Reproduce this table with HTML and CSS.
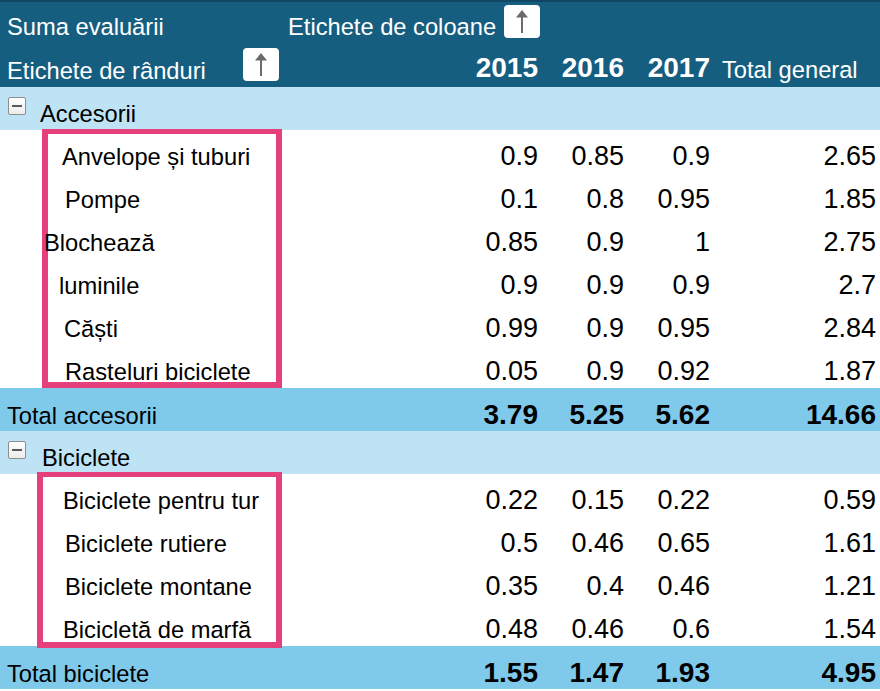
FILE: index.html
```html
<!DOCTYPE html>
<html lang="ro">
<head>
<meta charset="utf-8">
<title>Pivot</title>
<link rel="stylesheet" href="styles.css">
</head>
<body>
<div class="pivot">
  <header class="hdr">
    <div class="hdr-top">
      <span class="hdr-text sum-label">Suma evaluării</span>
      <span class="hdr-text col-label">Etichete de coloane</span>
      <span class="sort-btn"><svg viewBox="0 0 36 33" width="36" height="33"><polygon points="18,5 12,12.5 24,12.5" fill="#6b6b6b"/><line x1="18" y1="12" x2="18" y2="28" stroke="#6b6b6b" stroke-width="2"/></svg></span>
    </div>
    <div class="grid hdr-bottom">
      <div class="row-label-cell">
        <span class="hdr-text row-label">Etichete de rânduri</span>
        <span class="sort-btn"><svg viewBox="0 0 36 33" width="36" height="33"><polygon points="18,5 12,12.5 24,12.5" fill="#6b6b6b"/><line x1="18" y1="12" x2="18" y2="28" stroke="#6b6b6b" stroke-width="2"/></svg></span>
      </div>
      <div class="year">2015</div>
      <div class="year">2016</div>
      <div class="year">2017</div>
      <div class="hdr-total">Total general</div>
    </div>
  </header>

  <div class="grid row group">
    <div class="label group-label"><span class="toggle"></span>Accesorii</div>
    <div></div><div></div><div></div><div></div>
  </div>

  <div class="items">
    <div class="highlight hl-first"></div>
    <div class="grid row item">
      <div class="label indent-62">Anvelope și tuburi</div>
      <div class="num">0.9</div><div class="num">0.85</div><div class="num">0.9</div><div class="num last">2.65</div>
    </div>
    <div class="grid row item">
      <div class="label indent-65">Pompe</div>
      <div class="num">0.1</div><div class="num">0.8</div><div class="num">0.95</div><div class="num last">1.85</div>
    </div>
    <div class="grid row item">
      <div class="label indent-44">Blochează</div>
      <div class="num">0.85</div><div class="num">0.9</div><div class="num">1</div><div class="num last">2.75</div>
    </div>
    <div class="grid row item">
      <div class="label indent-59">luminile</div>
      <div class="num">0.9</div><div class="num">0.9</div><div class="num">0.9</div><div class="num last">2.7</div>
    </div>
    <div class="grid row item">
      <div class="label indent-64">Căști</div>
      <div class="num">0.99</div><div class="num">0.9</div><div class="num">0.95</div><div class="num last">2.84</div>
    </div>
    <div class="grid row item">
      <div class="label indent-65">Rasteluri biciclete</div>
      <div class="num">0.05</div><div class="num">0.9</div><div class="num">0.92</div><div class="num last">1.87</div>
    </div>
  </div>

  <div class="grid row total">
    <div class="label total-label">Total accesorii</div>
    <div class="num">3.79</div><div class="num">5.25</div><div class="num">5.62</div><div class="num last">14.66</div>
  </div>

  <div class="grid row group">
    <div class="label group-label group-label-b"><span class="toggle"></span>Biciclete</div>
    <div></div><div></div><div></div><div></div>
  </div>

  <div class="items">
    <div class="highlight hl-second"></div>
    <div class="grid row item">
      <div class="label indent-63">Biciclete pentru tur</div>
      <div class="num">0.22</div><div class="num">0.15</div><div class="num">0.22</div><div class="num last">0.59</div>
    </div>
    <div class="grid row item">
      <div class="label indent-65">Biciclete rutiere</div>
      <div class="num">0.5</div><div class="num">0.46</div><div class="num">0.65</div><div class="num last">1.61</div>
    </div>
    <div class="grid row item">
      <div class="label indent-65">Biciclete montane</div>
      <div class="num">0.35</div><div class="num">0.4</div><div class="num">0.46</div><div class="num last">1.21</div>
    </div>
    <div class="grid row item">
      <div class="label indent-63"><span class="cover">Bicicletă de </span>marfă</div>
      <div class="num">0.48</div><div class="num">0.46</div><div class="num">0.6</div><div class="num last">1.54</div>
    </div>
  </div>

  <div class="grid row total">
    <div class="label total-label">Total biciclete</div>
    <div class="num">1.55</div><div class="num">1.47</div><div class="num">1.93</div><div class="num last">4.95</div>
  </div>
</div>
</body>
</html>
```

FILE: styles.css
```css
* { box-sizing: border-box; }

html, body {
  margin: 0;
  padding: 0;
  background: #ffffff;
}

body {
  font-family: "Liberation Sans", Arial, sans-serif;
  color: #000;
  overflow: hidden;
}

.pivot {
  width: 880px;
}

.grid {
  display: grid;
  grid-template-columns: 452px 86px 86px 86px 170px;
}

/* ---------- header ---------- */
.hdr {
  background: #165e80;
  border-top: 2px solid #0f4764;
  height: 87px;
  color: #fff;
}

.hdr-top {
  display: flex;
  align-items: flex-start;
  height: 44px;
}

.hdr-text {
  font-size: 23.7px;
  line-height: 1;
  white-space: nowrap;
}

.sum-label {
  width: 288px;
  padding-left: 7px;
  margin-top: 14px;
}

.col-label {
  width: 216px;
  margin-top: 14px;
}

.sort-btn {
  display: block;
  width: 36px;
  height: 33px;
  background: #ffffff;
  border-radius: 4px;
  margin-top: 3px;
}

.sort-btn svg {
  display: block;
}

.hdr-bottom {
  height: 41px;
  align-items: start;
}

.row-label-cell {
  display: flex;
  align-items: flex-start;
  padding-left: 7px;
}

.row-label {
  width: 236px;
  margin-top: 14px;
}

.row-label-cell .sort-btn {
  margin-top: 2px;
}

.year {
  font-size: 28px;
  font-weight: bold;
  line-height: 1;
  text-align: right;
  margin-top: 8px;
}

.hdr-total {
  font-size: 23.7px;
  line-height: 1;
  padding-left: 12px;
  margin-top: 13px;
  white-space: nowrap;
}

/* ---------- body rows ---------- */
.row {
  height: 43px;
  align-items: baseline;
  padding-top: 13px;
}

.label {
  font-size: 23.7px;
  line-height: 1;
  white-space: nowrap;
  position: relative;
  z-index: 2;
}

.num {
  font-size: 27px;
  line-height: 1;
  text-align: right;
}

.num.last {
  padding-right: 4px;
}

.group {
  background: #bee3f5;
  padding-top: 10px;
}

.group-label {
  padding-left: 8px;
}

.toggle {
  display: inline-block;
  position: relative;
  width: 18px;
  height: 18px;
  border: 1px solid #8d8d8d;
  border-radius: 2px;
  background: linear-gradient(#ffffff, #ececec);
  vertical-align: 7px;
  margin-right: 14px;
}

.group-label-b .toggle {
  margin-right: 16px;
}

.toggle::after {
  content: "";
  position: absolute;
  left: 3px;
  right: 3px;
  top: 7px;
  height: 2px;
  background: #5a5a5a;
}

.item {
  background: #ffffff;
}

.total {
  background: #7fc9ea;
}

.total .num {
  font-size: 28px;
  font-weight: bold;
}

.total-label {
  padding-left: 7px;
}

.indent-44 { padding-left: 44px; }
.indent-59 { padding-left: 59px; }
.indent-62 { padding-left: 62px; }
.indent-63 { padding-left: 63px; }
.indent-64 { padding-left: 64px; }
.indent-65 { padding-left: 65px; }

.cover {
  background: #ffffff;
  padding-bottom: 3px;
}

/* ---------- highlight frames ---------- */
.items {
  position: relative;
}

.highlight {
  position: absolute;
  z-index: 1;
  border: 6px solid #e5407b;
  border-top-width: 5px;
  pointer-events: none;
}

.hl-first {
  left: 42px;
  width: 240px;
  top: -1px;
  bottom: 0;
}

.hl-second {
  left: 37px;
  width: 245px;
  top: -2px;
  bottom: -2px;
  z-index: 3;
}

.hl-second ~ .row .cover {
  position: relative;
  z-index: 4;
}
```
